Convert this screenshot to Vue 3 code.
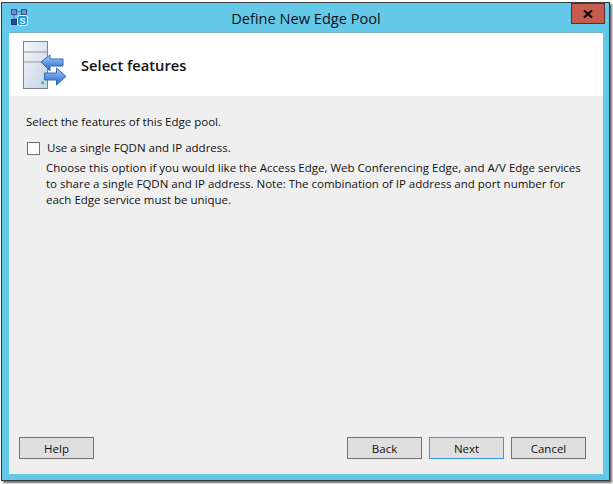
<script setup>
const lines = [
  'Choose this option if you would like the Access Edge, Web Conferencing Edge, and A/V Edge services',
  'to share a single FQDN and IP address. Note: The combination of IP address and port number for',
  'each Edge service must be unique.'
]
const buttons = ['Back', 'Next', 'Cancel']
</script>

<template>
  <div class="page">
    <div class="window">
      <div class="titlebar">
        <svg class="appicon" width="18" height="18" viewBox="0 0 18 18">
          <path d="M4 4 V13 M14 4 L4 13 M4 3.500 H13" stroke="#5a7fc0" stroke-width="1.2" fill="none" />
          <rect x="1.500" y="1.500" width="5" height="5" fill="#6f8fd0" stroke="#34529a" />
          <rect x="11.500" y="1.500" width="5" height="5" fill="#6f8fd0" stroke="#34529a" />
          <rect x="1.500" y="11.500" width="5" height="5" fill="#2c4a96" stroke="#1f3778" />
          <rect x="7.500" y="7.500" width="10" height="10" rx="2" fill="#1a9be6" stroke="#ffffff" />
          <text x="12.500" y="16" class="s">S</text>
        </svg>
        <span class="title">Define New Edge Pool</span>
        <div class="close">
          <svg width="10" height="8" viewBox="0 0 10 8">
            <path d="M1 0.500 L9 7.500 M9 0.500 L1 7.500" stroke="#000" stroke-width="2" />
          </svg>
        </div>
      </div>
      <div class="client">
        <header class="head">
          <svg class="wizard" width="44" height="50" viewBox="0 0 44 50">
            <defs>
              <linearGradient id="srv" x1="0" y1="0" x2="1" y2="1">
                <stop offset="0" stop-color="#f6f8fb" />
                <stop offset="1" stop-color="#c3d2e6" />
              </linearGradient>
              <linearGradient id="arr" x1="0" y1="0" x2="0" y2="1">
                <stop offset="0" stop-color="#b4d2f6" />
                <stop offset="0.500" stop-color="#5f97e2" />
                <stop offset="1" stop-color="#2566c4" />
              </linearGradient>
            </defs>
            <rect x="0.500" y="1.500" width="24" height="47" fill="url(#srv)" stroke="#7d8590" />
            <path d="M0.500 12 H24.500 M0.500 22 H24.500" stroke="#8f97a3" />
            <rect x="18.500" y="41.500" width="2.500" height="2.500" fill="#22cc33" />
            <path d="M18 22 L27 15 V19 H40 V26 H27 V31 Z" fill="url(#arr)" stroke="#2f68b8" />
            <path d="M43 36.500 L33.500 28 V33 H21.500 V40 H33.500 V45 Z" fill="url(#arr)" stroke="#2f68b8" />
          </svg>
          <h1 class="heading">Select features</h1>
        </header>
        <main class="body">
          <p class="intro">Select the features of this Edge pool.</p>
          <label class="option">
            <span class="box"></span>
            <span>Use a single FQDN and IP address.</span>
          </label>
          <div class="desc">
            <div v-for="l in lines" :key="l">{{ l }}</div>
          </div>
        </main>
        <footer class="foot">
          <button class="btn">Help</button>
          <div class="right">
            <button v-for="b in buttons" :key="b" class="btn" :class="{ focus: b === 'Next' }">{{ b }}</button>
          </div>
        </footer>
      </div>
    </div>
  </div>
</template>

<style>
html, body { margin: 0; background: #fff; }
</style>

<style scoped>
.page {
  width: 613px;
  height: 484px;
  padding: 2px 0 0 1px;
  box-sizing: border-box;
  overflow: hidden;
  font-family: "Open Sans", "Noto Sans", sans-serif;
  color: #111;
}
.window {
  width: 609px;
  height: 479px;
  box-sizing: border-box;
  border: 1px solid #3c3c3c;
  background: #64c8e9;
  padding: 0 6px 6px 7px;
  display: flex;
  flex-direction: column;
  box-shadow: 2px 2px 2px #6a6a6a;
}
.titlebar {
  height: 29px;
  flex: none;
  display: flex;
  align-items: flex-start;
  position: relative;
}
.appicon { position: absolute; left: 1px; top: 5px; }
.s { font: bold 9px "Liberation Sans", sans-serif; fill: #fff; text-anchor: middle; }
.title {
  width: 100%;
  text-align: center;
  font-size: 14.600px;
  line-height: 30px;
  color: #111;
}
.close {
  position: absolute;
  right: -2px;
  top: 0;
  width: 34px;
  height: 21px;
  box-sizing: border-box;
  background: #c75b50;
  border: 1px solid #5e2c28;
  display: flex;
  align-items: center;
  justify-content: center;
}
.client {
  flex: 1;
  background: #efefef;
  display: flex;
  flex-direction: column;
  border-top: 1px solid #7fa9bd;
  min-height: 0;
}
.head {
  height: 63px;
  background: #fff;
  display: flex;
  align-items: center;
  flex: none;
}
.wizard { margin: 7px 0 0 14px; flex: none; align-self: flex-start; }
.heading {
  margin: 0 0 0 14px;
  font-size: 14.700px;
  font-weight: 600;
  color: #111;
}
.body {
  flex: 1;
  padding: 18px 0 0 17px;
  font-size: 11.500px;
  line-height: 16px;
}
.intro { margin: 0 0 10px 0; }
.option { display: flex; align-items: center; }
.box {
  width: 13px;
  height: 13px;
  box-sizing: border-box;
  border: 1px solid #707070;
  background: #fff;
  margin: 0 7px 0 1px;
}
.desc { margin: 4px 0 0 20px; white-space: nowrap; }
.foot {
  display: flex;
  justify-content: space-between;
  padding: 0 17px 15px 10px;
}
.right { display: flex; gap: 7px; }
.btn {
  width: 75px;
  height: 22px;
  padding: 0;
  box-sizing: border-box;
  background: #dfdfdf;
  border: 1px solid #707070;
  font: inherit;
  font-size: 11.500px;
  color: #111;
}
.btn.focus { border-color: #3c93f0; }
</style>
